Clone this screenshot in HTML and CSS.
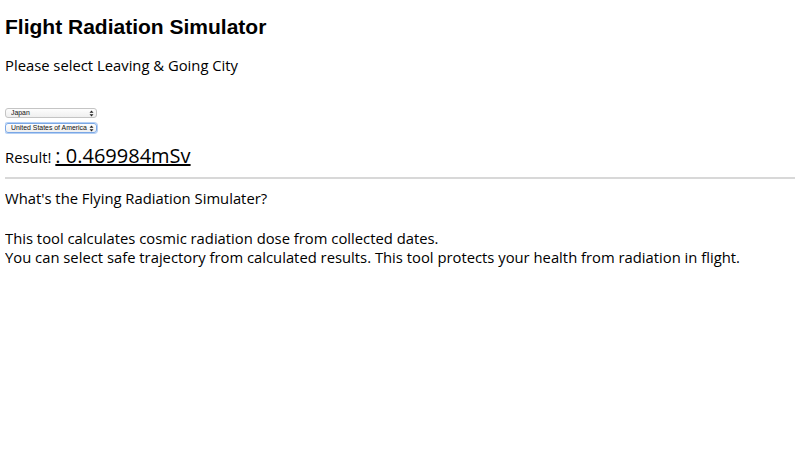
FILE: index.html
```html
<!DOCTYPE html>
<html>
<head>
<meta charset="utf-8">
<link rel="stylesheet" href="styles.css">
</head>
<body>
<h1 class="title">Flight Radiation Simulator</h1>
<p class="lead">Please select Leaving &amp; Going City</p>
<div class="selects">
  <div class="select-wrap">
    <select class="city"><option>Japan</option></select>
    <svg class="arrows" width="5" height="7" viewBox="0 0 5 7"><path d="M0.5 2.8 L2.5 0.6 L4.5 2.8 Z M0.5 4.2 L2.5 6.4 L4.5 4.2 Z" fill="#222"/></svg>
  </div>
  <div class="select-wrap">
    <select class="city focused"><option>United States of America</option></select>
    <svg class="arrows" width="5" height="7" viewBox="0 0 5 7"><path d="M0.5 2.8 L2.5 0.6 L4.5 2.8 Z M0.5 4.2 L2.5 6.4 L4.5 4.2 Z" fill="#222"/></svg>
  </div>
</div>
<div class="result">Result! <a class="value" href="#">: 0.469984mSv</a></div>
<hr class="rule">
<p class="text">What's the Flying Radiation Simulater?</p>
<p class="text">This tool calculates cosmic radiation dose from collected dates.<br>You can select safe trajectory from calculated results. This tool protects your health from radiation in flight.</p>
</body>
</html>
```
FILE: styles.css
```css
body {
  margin: 5px;
  font-family: "Comic Sans MS", "Open Sans", sans-serif;
  font-size: 14.8px;
  color: #000;
  background: #fff;
}
.title {
  font-family: "Liberation Sans", Arial, sans-serif;
  font-size: 21px;
  font-weight: bold;
  margin: 9px 0 0;
  line-height: 26px;
}
.lead {
  margin: 15px 0 0;
  line-height: 20px;
}
.selects {
  display: flex;
  flex-direction: column;
  align-items: flex-start;
  gap: 5px;
  margin-top: 33px;
}
.select-wrap {
  position: relative;
  display: flex;
}
.city {
  appearance: none;
  -webkit-appearance: none;
  font-family: "Liberation Sans", Arial, sans-serif;
  font-size: 6.9px;
  line-height: 8px;
  height: 10px;
  width: 92px;
  padding: 0 0 0 5px;
  margin: 0;
  border: 1px solid #c4c4c4;
  border-radius: 3px;
  background: linear-gradient(#fdfdfd, #efefef);
  color: #111;
}
.focused {
  border-color: #7aa7e6;
  box-shadow: 0 0 0 1px #b5d0f4;
}
.arrows {
  position: absolute;
  right: 3px;
  top: 1.5px;
  pointer-events: none;
}
.result {
  margin-top: 11px;
  font-size: 14.8px;
  line-height: 24px;
}
.value {
  color: #000;
  font-size: 20px;
}
.rule {
  margin: 8px 0 0;
  border: 0;
  border-top: 2px solid #d8d8d8;
}
.text {
  margin: 10px 0 0;
  line-height: 19px;
}
.text + .text {
  margin-top: 21px;
}
```
